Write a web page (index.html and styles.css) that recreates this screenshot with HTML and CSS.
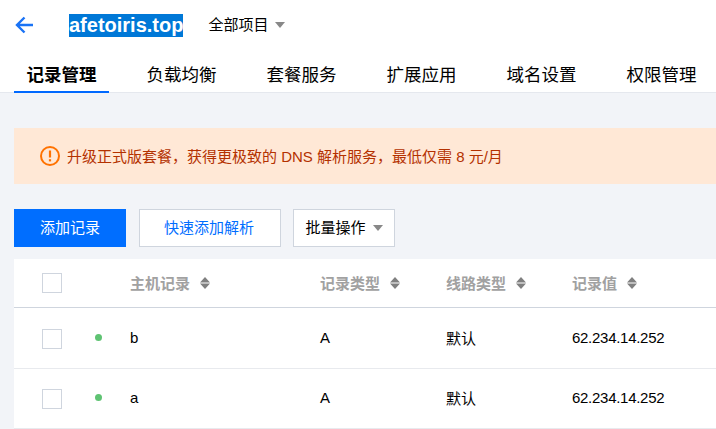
FILE: index.html
```html
<!DOCTYPE html>
<html lang="zh-CN">
<head>
<meta charset="utf-8">
<title>afetoiris.top</title>
<link rel="stylesheet" href="styles.css">
</head>
<body>
<header class="top">
  <div class="title-row">
    <svg class="back" width="18" height="18" viewBox="0 0 18 18" aria-hidden="true"><path d="M18 9H2.5M9.5 1.5 2 9l7.5 7.5" fill="none" stroke="#1a73f5" stroke-width="2.4"/></svg>
    <span class="domain">afetoiris.top</span>
    <span class="project">全部项目</span>
    <i class="caret"></i>
  </div>
  <nav class="tabs">
    <a class="tab active">记录管理</a>
    <a class="tab">负载均衡</a>
    <a class="tab">套餐服务</a>
    <a class="tab">扩展应用</a>
    <a class="tab">域名设置</a>
    <a class="tab">权限管理</a>
  </nav>
</header>
<main class="content">
  <div class="alert">
    <svg class="alert-icon" width="20" height="20" viewBox="0 0 20 20" aria-hidden="true"><circle cx="10" cy="10" r="9" fill="none" stroke="#ff7200" stroke-width="2"/><path d="M10 4.5v7" stroke="#ff7200" stroke-width="2.2"/><path d="M10 13.2v2.2" stroke="#ff7200" stroke-width="2.2"/></svg>
    <span class="alert-text">升级正式版套餐，获得更极致的 DNS 解析服务，最低仅需 8 元/月</span>
  </div>
  <div class="toolbar">
    <button class="btn primary"><span class="label">添加记录</span></button>
    <button class="btn link"><span class="label">快速添加解析</span></button>
    <button class="btn menu"><span class="label">批量操作</span><i class="caret small"></i></button>
  </div>
  <section class="table">
    <div class="row head">
      <span class="check"></span>
      <span></span>
      <span class="th">主机记录<svg class="sort" width="10" height="12" viewBox="0 0 10 12" aria-hidden="true"><path d="M5 0 10 5.4H0zM5 12 0 6.6h10z" fill="#808080"/></svg></span>
      <span class="th">记录类型<svg class="sort" width="10" height="12" viewBox="0 0 10 12" aria-hidden="true"><path d="M5 0 10 5.4H0zM5 12 0 6.6h10z" fill="#808080"/></svg></span>
      <span class="th">线路类型<svg class="sort" width="10" height="12" viewBox="0 0 10 12" aria-hidden="true"><path d="M5 0 10 5.4H0zM5 12 0 6.6h10z" fill="#808080"/></svg></span>
      <span class="th">记录值<svg class="sort" width="10" height="12" viewBox="0 0 10 12" aria-hidden="true"><path d="M5 0 10 5.4H0zM5 12 0 6.6h10z" fill="#808080"/></svg></span>
    </div>
    <div class="row body">
      <span class="check"></span>
      <span class="dot"></span>
      <span class="cell">b</span>
      <span class="cell">A</span>
      <span class="cell">默认</span>
      <span class="cell num">62.234.14.252</span>
    </div>
    <div class="row body">
      <span class="check"></span>
      <span class="dot"></span>
      <span class="cell">a</span>
      <span class="cell">A</span>
      <span class="cell">默认</span>
      <span class="cell num">62.234.14.252</span>
    </div>
  </section>
</main>
</body>
</html>
```
FILE: styles.css
```css
* { box-sizing: border-box; }
html, body { margin: 0; height: 429px; overflow: hidden; }
body {
  background: #f2f4f8;
  font-family: "Liberation Sans", "Noto Sans CJK SC", sans-serif;
  font-size: 15px;
  color: #000;
}
.top { background: #fff; height: 93px; border-bottom: 1px solid #e5e8ee; padding-left: 14px; }
.title-row { display: flex; align-items: center; height: 50px; }
.back { flex: none; margin-left: 1px; }
.domain {
  margin-left: 36px;
  background: #0078d7;
  color: #fff;
  font-size: 20px;
  font-weight: 700;
  line-height: 23px;
  white-space: nowrap;
}
.project { margin-left: 25px; margin-top: -3px; margin-right: 0; }
.caret { width: 0; height: 0; border: 5px solid transparent; border-top: 6px solid #888; border-bottom: 0; margin-left: 7px; display: block; }
.tabs { display: flex; gap: 25px; }
.tab { width: 95px; height: 43px; padding-top: 13px; text-align: center; font-size: 17.5px; line-height: 24px; border-bottom: 1px solid transparent; }
.tab.active { font-weight: 700; border-bottom: 2px solid #0069ff; }
.content { padding: 35px 0 0 14px; }
.alert { display: flex; align-items: center; height: 56px; background: #ffe8d6; color: #b43100; padding-left: 26px; gap: 7px; }
.alert-icon { flex: none; }
.alert-text { margin-top: -2px; }
.toolbar { display: flex; margin-top: 25px; }
.btn { height: 38px; padding: 0; font: inherit; border: 1px solid #cfd5de; background: #fff; display: flex; align-items: center; justify-content: center; }
.label { margin-top: -3px; }
.primary { width: 112px; background: #006eff; border-color: #006eff; color: #fff; }
.link { width: 142px; margin-left: 13px; padding-right: 2px; color: #006eff; }
.menu { width: 102px; margin-left: 12px; }
.caret.small { margin-left: 7px; }
.table { background: #fff; margin-top: 12px; }
.row { display: grid; grid-template-columns: 48px 40px 190px 126px 126px 1fr; align-items: center; padding-left: 28px; }
.head { height: 49px; border-bottom: 1px solid #cfd5de; }
.body { height: 61px; padding-top: 1px; border-bottom: 1px solid #e8eaee; }
.body + .body { height: 60px; padding-top: 0; }
.check { width: 20px; height: 20px; border: 1px solid #cfd5de; background: #fff; }
.dot { width: 7px; height: 7px; border-radius: 50%; background: #5fc373; margin-left: 5px; margin-top: -2px; }
.th { color: #a1a1a1; font-weight: 700; display: flex; align-items: center; margin-top: -2px; }
.sort { margin-left: 10px; margin-top: 2px; }
.cell { margin-top: -2px; }
.num { letter-spacing: -0.28px; }
```
